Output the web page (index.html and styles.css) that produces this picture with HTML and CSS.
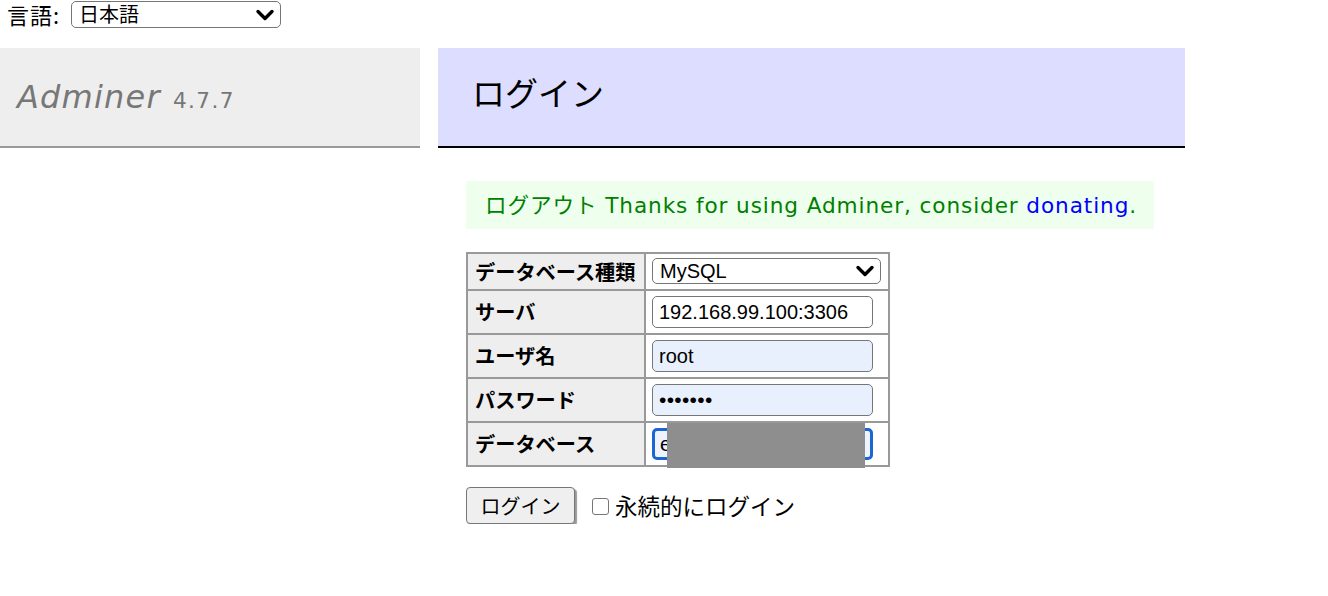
FILE: index.html
```html
<!DOCTYPE html>
<html lang="ja">
<head>
<meta charset="utf-8">
<title>ログイン - Adminer</title>
<link rel="stylesheet" href="styles.css">
</head>
<body>
<div class="lang">
  <span class="lang-label">言語:</span>
  <div class="select-wrap lang-select">
    <select><option>日本語</option></select>
    <svg class="chev" width="20" height="12" viewBox="0 0 20 12"><polyline points="3,2.5 10,9.5 17,2.5" fill="none" stroke="#000" stroke-width="3.4" stroke-linecap="round" stroke-linejoin="round"/></svg>
  </div>
</div>
<div class="layout">
  <div class="menu">
    <h1><a class="brand" href="#">Adminer</a> <span class="version">4.7.7</span></h1>
  </div>
  <div class="content">
    <h2>ログイン</h2>
    <div class="message">ログアウト Thanks for using Adminer, consider <a href="#">donating</a>.</div>
    <form class="login-form">
      <table class="login">
        <tr class="r1">
          <th>データベース種類</th>
          <td>
            <div class="select-wrap driver">
              <select><option>MySQL</option></select>
              <svg class="chev" width="20" height="12" viewBox="0 0 20 12"><polyline points="3,2.5 10,9.5 17,2.5" fill="none" stroke="#000" stroke-width="3.4" stroke-linecap="round" stroke-linejoin="round"/></svg>
            </div>
          </td>
        </tr>
        <tr>
          <th>サーバ</th>
          <td><input class="field" type="text" value="192.168.99.100:3306"></td>
        </tr>
        <tr>
          <th>ユーザ名</th>
          <td><input class="field autofill" type="text" value="root"></td>
        </tr>
        <tr>
          <th>パスワード</th>
          <td><input class="field autofill pw" type="password" value="1234567"></td>
        </tr>
        <tr>
          <th>データベース</th>
          <td class="db-cell"><input class="field focus" type="text" value="e"><div class="redact"></div></td>
        </tr>
      </table>
      <div class="actions">
        <button class="btn" type="button">ログイン</button>
        <label class="perm"><input class="check" type="checkbox">永続的にログイン</label>
      </div>
    </form>
  </div>
</div>
</body>
</html>
```

FILE: styles.css
```css
body {
  margin: 0;
  font: 21.6px/1.25 "DejaVu Sans", "Noto Sans CJK JP", sans-serif;
  color: #000;
  background: #fff;
}

.lang {
  height: 48px;
  box-sizing: border-box;
  padding: 1px 0 0 7px;
  display: flex;
  align-items: flex-start;
}

.lang-label {
  line-height: 27px;
  font-family: "Noto Sans CJK JP", sans-serif;
  font-size: 22px;
  letter-spacing: 1px;
  width: 64px;
  flex: none;
}

.select-wrap {
  position: relative;
  display: inline-block;
}

select {
  -webkit-appearance: none;
  appearance: none;
  font: 20px "Liberation Sans", "Noto Sans CJK JP", sans-serif;
  color: #000;
  background: #fff;
  border: 1.5px solid #767676;
  border-radius: 5px;
  box-sizing: border-box;
  padding: 0 0 0 7px;
  margin: 0;
  display: block;
}

.lang-select select {
  width: 210px;
  height: 27px;
}

.chev {
  position: absolute;
  right: 6px;
  top: 50%;
  margin-top: -6px;
  pointer-events: none;
}

.layout {
  display: flex;
  align-items: flex-start;
}

.menu {
  width: 420px;
  flex: none;
}

.menu h1 {
  margin: 0;
  height: 100px;
  box-sizing: border-box;
  border-bottom: 2px solid #999;
  background: #eee;
  font-weight: normal;
  font-size: 32px;
  line-height: 98px;
  padding-left: 17px;
  color: #777;
  white-space: nowrap;
}

.brand {
  font-style: italic;
  color: #777;
  text-decoration: none;
  letter-spacing: 1.2px;
}

.version {
  font-size: 21.6px;
  color: #777;
  letter-spacing: 1.4px;
  margin-left: 2px;
}

.content {
  margin-left: 18px;
  width: 747px;
  box-sizing: border-box;
  padding-left: 28px;
}

.content h2 {
  margin: 0 0 0 -28px;
  height: 100px;
  box-sizing: border-box;
  background: #ddf;
  border-bottom: 2px solid #000;
  font-weight: normal;
  font-size: 33px;
  line-height: 88px;
  padding-left: 34px;
  font-family: "Noto Sans CJK JP", sans-serif;
}

.message {
  margin-top: 33px;
  width: 688px;
  height: 48px;
  box-sizing: border-box;
  background: #efe;
  color: #008000;
  padding-left: 19px;
  line-height: 50px;
  letter-spacing: 0.9px;
  white-space: nowrap;
}

.message a {
  color: #00f;
  text-decoration: none;
}

.login {
  margin-top: 23px;
  border-collapse: collapse;
  border: 2px solid #999;
}

.login th,
.login td {
  border: 2px solid #999;
  padding: 0;
  vertical-align: middle;
}

.login tr {
  height: 44px;
}

.login tr.r1 {
  height: 37px;
}

.login th {
  background: #eee;
  text-align: left;
  font-family: "Noto Sans CJK JP", sans-serif;
  font-size: 20.2px;
  font-weight: bold;
  padding-left: 7px;
  width: 169px;
  white-space: nowrap;
}

.login td {
  padding-left: 6px;
  width: 236px;
}

.driver select {
  width: 229px;
  height: 26px;
}

.field {
  font: 20px "Liberation Sans", sans-serif;
  color: #000;
  width: 221px;
  height: 32px;
  box-sizing: border-box;
  border: 1.5px solid #767676;
  border-radius: 5px;
  padding: 0 0 0 6px;
  background: #fff;
  margin: 0;
  outline: none;
  display: block;
}

.autofill {
  background: #e8f0fe;
}

.pw {
  font-size: 21px;
  letter-spacing: 0.3px;
}

.focus {
  border: 3px solid #1a66d2;
  background: #eef3fd;
  padding-left: 5px;
}

.db-cell {
  position: relative;
}

.redact {
  position: absolute;
  left: 21px;
  top: 0;
  bottom: -3px;
  width: 198px;
  background: #8e8e8e;
}

.actions {
  margin-top: 20px;
  display: flex;
  align-items: center;
}

.btn {
  font: 20px "Noto Sans CJK JP", sans-serif;
  color: #000;
  width: 109px;
  height: 37px;
  box-sizing: border-box;
  background: #efefef;
  border: 1.5px solid #767676;
  border-radius: 4px;
  box-shadow: 2px 2px 1px #9a9a9a;
  padding: 0;
  margin: 0;
}

.perm {
  display: flex;
  align-items: center;
  margin-left: 17px;
  font-family: "Noto Sans CJK JP", sans-serif;
  font-size: 22.5px;
}

.check {
  -webkit-appearance: none;
  appearance: none;
  width: 17px;
  height: 17px;
  box-sizing: border-box;
  border: 1.5px solid #767676;
  border-radius: 3px;
  background: #fff;
  margin: 1px 6px 0 0;
}
```
